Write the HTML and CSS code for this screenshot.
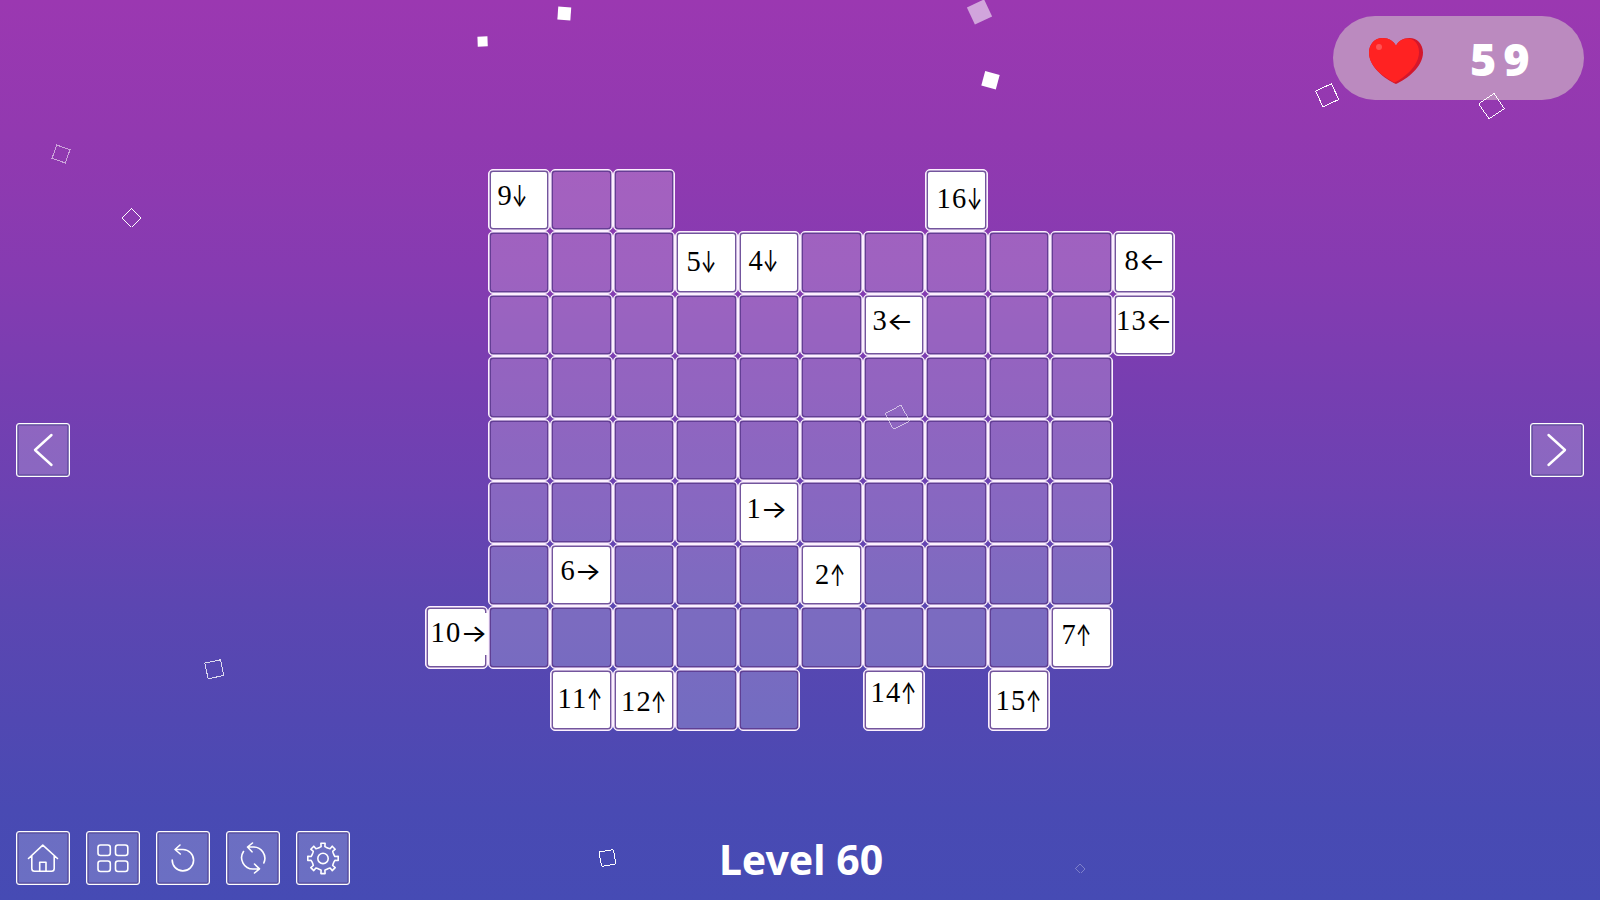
FILE: index.html
```
<!DOCTYPE html>
<html lang="en">
<head>
    <meta charset="UTF-8">
    <meta name="viewport" content="width=device-width, initial-scale=1.0">
    <title>Level 60</title>
    <link rel="stylesheet" href="styles.css">
</head>
<body>
    <svg class="confetti" viewBox="0 0 1600 900">
        <g class="solid">
            <rect x="-6.5" y="-6.5" width="13" height="13" transform="translate(564.3 13.5) rotate(4)"/>
            <rect x="-5" y="-5" width="10" height="10" transform="translate(482.6 41.5) rotate(-2)"/>
            <rect x="-9.5" y="-9.5" width="19" height="19" transform="translate(979.5 12) rotate(-25)" opacity="0.55"/>
            <rect x="-7.5" y="-7.5" width="15" height="15" transform="translate(990.5 80.3) rotate(15)"/>
        </g>
        <g class="hollow">
            <rect x="-7" y="-7" width="14" height="14" transform="translate(61 154) rotate(20)" opacity="0.55"/>
            <rect x="-6.5" y="-6.5" width="13" height="13" transform="translate(131.6 217.5) rotate(45)"/>
            <rect x="-8" y="-8" width="16" height="16" transform="translate(214.3 669.3) rotate(-12)" opacity="0.8"/>
            <rect x="-9" y="-9" width="18" height="18" transform="translate(897.3 417.3) rotate(-28)" opacity="0.6"/>
            <rect x="-7.3" y="-7.3" width="14.6" height="14.6" transform="translate(607.5 858) rotate(-10)"/>
            <rect x="-3" y="-3" width="6" height="6" transform="translate(1080 868.5) rotate(45)" opacity="0.3"/>
            <rect x="-8.7" y="-8.7" width="17.4" height="17.4" transform="translate(1327.2 95.3) rotate(-25)"/>
            <rect x="-9.2" y="-9.2" width="18.4" height="18.4" transform="translate(1491.5 106.2) rotate(-34)"/>
        </g>
    </svg>

    <div class="game">
        <header>
            <div class="lives">
                <svg class="heart" viewBox="0 0 54 46">
                    <path fill="#d3172c" d="M27 46C16 41 0 29 0 14.500C0 6 6 0 13.500 0C20 0 25 3.500 27 8C29 3.500 34 0 40.500 0C48 0 54 6 54 14.500C54 29 38 41 27 46Z"/>
                    <path fill="#ff2222" d="M25.500 44.500C15 39 0 29 0 14.500C0 6 6 0 13.500 0C20 0 25 3.500 27 8C29 3.500 33 .6 39 .6C45 .6 50 6 50 14C50 27 37 39 25.500 44.500Z"/>
                    <circle cx="10" cy="9" r="3" fill="#ff5252"/>
                </svg>
                <span class="count">59</span>
            </div>
        </header>

        <main>
            <button class="btn" aria-label="Previous level">
                <svg class="arrow" viewBox="0 0 54 54"><path d="M35.500 12L19 27L35.500 42"/></svg>
            </button>
            <div class="board" id="board"></div>
            <button class="btn" aria-label="Next level">
                <svg class="arrow" viewBox="0 0 54 54"><path d="M18.500 12L35 27L18.500 42"/></svg>
            </button>
        </main>

        <footer>
            <nav>
                <button class="btn" aria-label="Home">
                    <svg viewBox="0 0 54 54"><path d="M12.500 27.500L26.800 14.200L41.500 27.500M15.800 24.800V37.500Q15.800 40.200 18.500 40.200H35.500Q38.200 40.200 38.200 37.500V24.800M23.700 40V31.300H30V40"/></svg>
                </button>
                <button class="btn" aria-label="Levels">
                    <svg viewBox="0 0 54 54"><rect x="12" y="14" width="12.300" height="10.500" rx="2.500"/><rect x="29.500" y="14" width="12.300" height="10.500" rx="2.500"/><rect x="12" y="30" width="12.300" height="10.500" rx="2.500"/><rect x="29.500" y="30" width="12.300" height="10.500" rx="2.500"/></svg>
                </button>
                <button class="btn" aria-label="Undo">
                    <svg viewBox="0 0 54 54"><path d="M19 18.500H27A10.700 10.700 0 1 1 16.200 29M24 14L19 18.500L24.300 23"/></svg>
                </button>
                <button class="btn" aria-label="Restart">
                    <svg viewBox="0 0 54 54"><path d="M22 16H27A11.300 11.300 0 0 1 37.800 32M26.500 12L21.500 16L26 20.800M17.500 20.500A11.300 11.300 0 0 0 27 38H33M28.500 33L33.500 37.800L28.500 42"/></svg>
                </button>
                <button class="btn" aria-label="Settings">
                    <svg viewBox="0 0 54 54"><circle cx="27" cy="27.400" r="5.200"/><path id="gear"/></svg>
                </button>
            </nav>
            <h1>Level 60</h1>
        </footer>
    </div>

    <script>
        // '.' = no cell, 'o' = letter cell, '#' = clue cell
        const rows = [
            '.#oo....#...',
            '.ooo##ooooo#',
            '.oooooo#ooo#',
            '.oooooooooo.',
            '.oooooooooo.',
            '.oooo#ooooo.',
            '.o#ooo#oooo.',
            '#ooooooooo#.',
            '..##oo.#.#..'
        ];

        // clues in reading order: number, arrow, left and baseline inside the cell
        const clues = [
            [9, '↓', 9, 36], [16, '↓', 10.500, 39],
            [5, '↓', 10.500, 40], [4, '↓', 10, 38.500], [8, '←', 11, 38.500],
            [3, '←', 9, 36.500], [13, '←', 2.500, 36.500],
            [1, '→', 8, 37],
            [6, '→', 9.500, 36],
            [2, '↑', 14, 40],
            [10, '→', 4.500, 36],
            [7, '↑', 10.500, 38],
            [11, '↑', 6.500, 39.500], [12, '↑', 7.500, 42], [14, '↑', 7, 33.500], [15, '↑', 7, 41]
        ];

        const board = document.getElementById('board');
        let next = 0;
        rows.join('').split('').forEach(type => {
            const cell = document.createElement('div');
            if (type !== '.') cell.className = 'cell';
            if (type === '#') {
                const [number, arrow, left, baseline] = clues[next++];
                const flat = arrow === '←' || arrow === '→';
                cell.classList.add('clue');
                if (number === 10) cell.classList.add('open');
                cell.style.paddingLeft = left + 'px';
                cell.style.paddingTop = (baseline - 27) + 'px';
                cell.innerHTML = number + '<span class="' + (flat ? 'flat' : 'tall') + '">' + arrow + '</span>';
            }
            board.appendChild(cell);
        });

        // eight-tooth gear outline
        let d = '';
        for (let i = 0; i < 8; i++) {
            [[-17, 11.500], [-9, 12], [-8, 15.300], [8, 15.300], [9, 12], [17, 11.500]].forEach(([angle, r]) => {
                const a = (i * 45 + angle) * Math.PI / 180;
                d += (d ? 'L' : 'M') + (27 + r * Math.sin(a)).toFixed(1) + ' ' + (27.400 - r * Math.cos(a)).toFixed(1);
            });
        }
        document.getElementById('gear').setAttribute('d', d + 'Z');
    </script>
</body>
</html>
```
FILE: styles.css
```
* {
    box-sizing: border-box;
}
body {
    margin: 0;
    height: 900px;
    overflow: hidden;
    background: linear-gradient(to bottom, #9b38b1 0%, #9239b0 15%, #863bb1 30%, #773eb1 43%, #6b42b2 55%, #5c46b1 67%, #5148b2 80%, #494ab3 90%, #464bb4 100%);
    font-family: "Noto Sans", "Open Sans", sans-serif;
    color: #fff;
}
.confetti {
    position: absolute;
    top: 0;
    left: 0;
    width: 1600px;
    height: 900px;
    pointer-events: none;
    z-index: 1;
}
.solid {
    fill: #fff;
}
.hollow {
    fill: none;
    stroke: #fff;
    stroke-width: 1;
    shape-rendering: crispEdges;
}
.game {
    display: flex;
    flex-direction: column;
    height: 900px;
    padding: 16px 16px 15px;
}
header {
    display: flex;
    justify-content: flex-end;
    height: 153px;
}
.lives {
    display: flex;
    align-items: center;
    width: 251px;
    height: 84px;
    padding-left: 36px;
    border-radius: 42px;
    background: #bb8abf;
}
.heart {
    width: 54px;
    height: 46px;
    margin-top: 6px;
}
.count {
    margin: 2px 0 0 47px;
    font-size: 45px;
    font-weight: 900;
    letter-spacing: 7px;
    line-height: 84px;
}
main {
    display: flex;
    justify-content: space-between;
    align-items: center;
    height: 562px;
}
.board {
    display: grid;
    grid-template-columns: repeat(12, 62.5px);
    grid-template-rows: repeat(9, 62.5px);
}
.cell {
    position: relative;
    border: 1px solid #fcf0ff;
    border-radius: 5px;
    background: rgba(255, 255, 255, 0.2);
    box-shadow: inset 0 0 0 0.6px #fcf0ff, inset 0 0 0 2px rgba(90, 55, 140, 0.85);
}
.clue {
    background: #fff;
    color: #000;
    font-family: "Liberation Serif", serif;
    font-size: 28.5px;
    line-height: 34px;
    letter-spacing: 1.3px;
    white-space: nowrap;
}
.clue span {
    display: inline-flex;
    justify-content: center;
    position: relative;
    z-index: 1;
    font-family: Inter, sans-serif;
    font-size: 24px;
    letter-spacing: 0;
    line-height: 1px;
}
.flat {
    width: 24px;
    transform: scale(1.18, 1);
}
.tall {
    width: 13px;
    transform: scale(0.78, 1.27);
}
.open::after {
    content: "";
    position: absolute;
    right: -1px;
    top: 6px;
    width: 4px;
    height: 42px;
    background: #fff;
}
.btn {
    width: 54px;
    height: 54px;
    padding: 0;
    border: 1px solid #fff;
    border-radius: 3px;
    background: rgba(255, 255, 255, 0.2);
    box-shadow: inset 0 0 0 0.3px #fff, inset 0 0 0 1.6px rgba(75, 60, 140, 0.8);
    cursor: pointer;
}
.btn svg {
    display: block;
    width: 54px;
    height: 54px;
    margin: -1px;
    fill: none;
    stroke: #fff;
    stroke-width: 1.6;
    stroke-linecap: round;
    stroke-linejoin: round;
}
.btn .arrow {
    stroke-width: 2.4;
}
footer {
    display: grid;
    grid-template-columns: 1fr auto 1fr;
    align-items: end;
    flex: 1;
}
nav {
    display: flex;
    gap: 16px;
}
h1 {
    margin: 0 0 -1px 2px;
    font-size: 41px;
    font-weight: 700;
    line-height: 54px;
}
```
